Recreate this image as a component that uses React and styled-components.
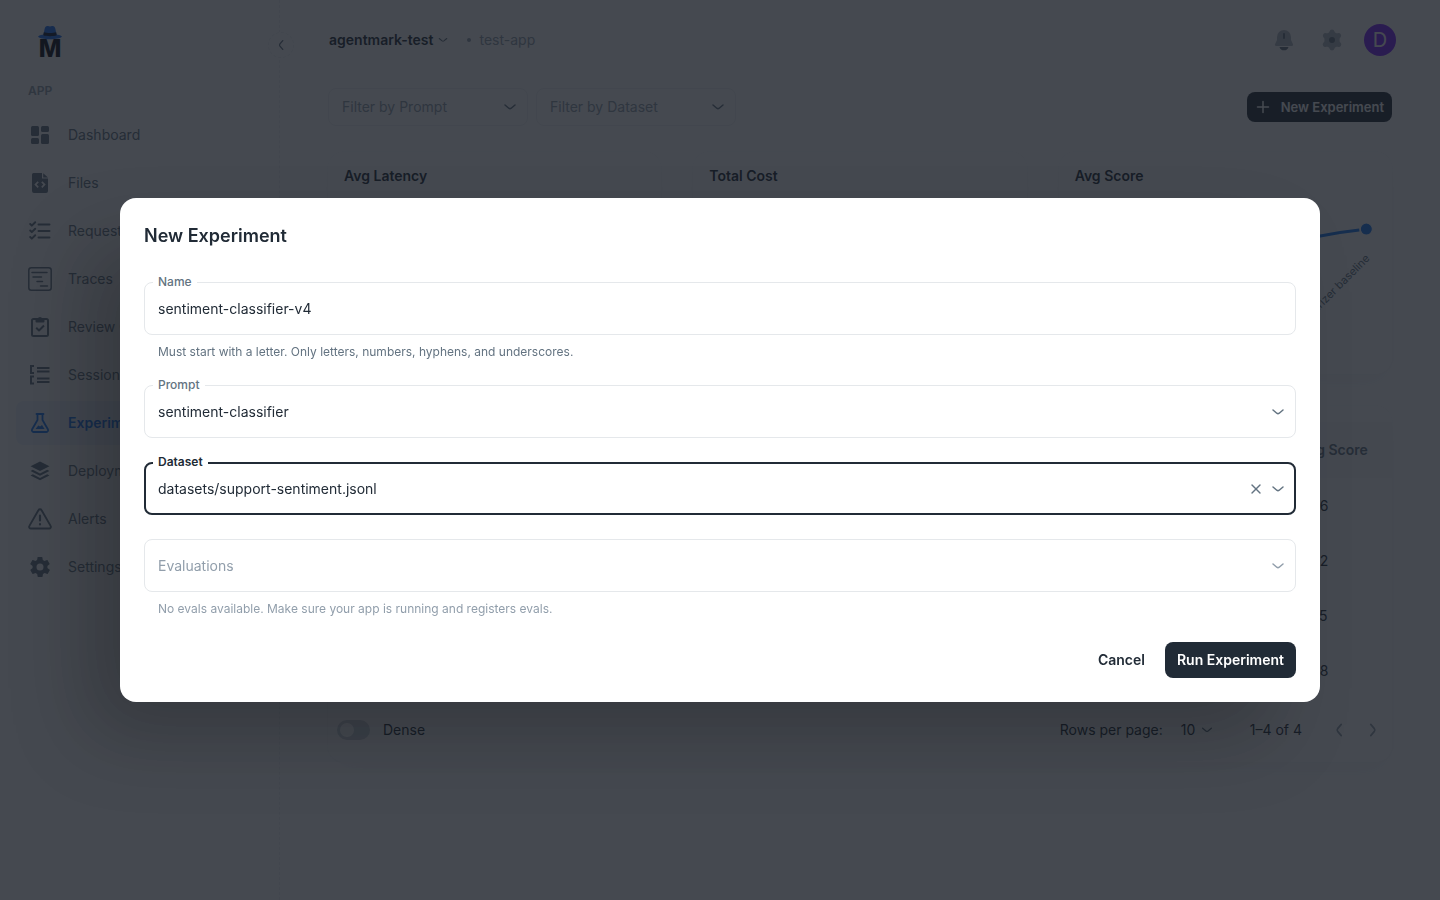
import styled, { createGlobalStyle } from 'styled-components'
import { FiX } from 'react-icons/fi'

const navItems = [
  { name: 'Dashboard', icon: 'dashboard' },
  { name: 'Files', icon: 'file' },
  { name: 'Requests', icon: 'checklist' },
  { name: 'Traces', icon: 'traces' },
  { name: 'Review Queue', icon: 'clipboard' },
  { name: 'Sessions', icon: 'sessions' },
  { name: 'Experiments', icon: 'flask', active: true },
  { name: 'Deployments', icon: 'layers' },
  { name: 'Alerts', icon: 'alert' },
  { name: 'Settings', icon: 'gear' },
]

const scores = ['0.86', '0.82', '0.75', '0.68']

const gearPath = 'M19.4 13a7.5 7.5 0 0 0 0-2l2.1-1.7c.2-.1.3-.4.1-.6l-2-3.5c-.1-.2-.4-.3-.6-.2l-2.5 1a7.3 7.3 0 0 0-1.7-1l-.4-2.6A.5.5 0 0 0 14 2h-4c-.3 0-.5.2-.5.4l-.4 2.6c-.6.3-1.2.6-1.7 1l-2.5-1c-.2-.1-.5 0-.6.2l-2 3.5c-.1.2-.1.5.1.6L4.6 11a7.5 7.5 0 0 0 0 2l-2.1 1.7c-.2.1-.3.4-.1.6l2 3.5c.1.2.4.3.6.2l2.5-1c.5.4 1.1.7 1.7 1l.4 2.6c0 .2.2.4.5.4h4c.3 0 .5-.2.5-.4l.4-2.6c.6-.3 1.2-.6 1.7-1l2.5 1c.2.1.5 0 .6-.2l2-3.5c.1-.2.1-.5-.1-.6zM12 15.5a3.5 3.5 0 1 1 0-7 3.5 3.5 0 0 1 0 7z'

const icons = {
  dashboard: (
    <g fill="currentColor">
      <rect x="3" y="3" width="8" height="10" rx="1.5" />
      <rect x="13" y="3" width="8" height="6" rx="1.5" />
      <rect x="3" y="15" width="8" height="6" rx="1.5" />
      <rect x="13" y="11" width="8" height="10" rx="1.5" />
    </g>
  ),
  file: (
    <path fill="currentColor" fillRule="evenodd" d="M5.5 2H14v5.5h6V20a2 2 0 0 1-2 2H6a2 2 0 0 1-2-2V3.5A1.500 1.500 0 0 1 5.500 2zM15.200 2.200l4.800 4.300h-4.800zM9.600 10.200 6.300 13.600l3.300 3.400 1.200-1.200-2.100-2.200 2.100-2.200zM14.400 10.200l-1.200 1.200 2.100 2.200-2.100 2.200 1.200 1.200 3.300-3.400z" />
  ),
  checklist: (
    <g fill="none" stroke="currentColor" strokeWidth="2" strokeLinecap="round" strokeLinejoin="round">
      <path d="M10.500 5.500h11M10.500 12h11M10.500 18.500h11" />
      <path d="m2.200 5 1.600 1.600 3.400-3.400M2.200 11.500l1.600 1.600 3.400-3.400M2.200 18l1.600 1.600 3.400-3.400" />
    </g>
  ),
  traces: (
    <g fill="none" stroke="currentColor" strokeWidth="1.500" strokeLinecap="round">
      <rect x="0.800" y="0.800" width="22.400" height="22.400" rx="2.500" />
      <path d="M4 5.500h15M5 10h8.500M9 14.500h5.500M12.500 19h7" />
    </g>
  ),
  clipboard: (
    <g fill="none" stroke="currentColor" strokeWidth="2" strokeLinejoin="round">
      <rect x="4" y="4" width="16" height="17" rx="1.500" />
      <path d="M8.500 4h2a1.600 1.600 0 0 1 3 0h2v2.500h-7z" fill="currentColor" />
      <path d="m8.200 12.800 2.800 2.700 5-5" />
    </g>
  ),
  sessions: (
    <g fill="none" stroke="currentColor" strokeWidth="2">
      <path d="M6 3H3v7h3M6 13.500H3v7h3" />
      <path d="M9 5h12.500M9 8.500h12.500M9 15.500h12.500M9 19h12.500" strokeWidth="1.800" />
    </g>
  ),
  flask: (
    <g fill="none" stroke="currentColor" strokeWidth="1.800" strokeLinejoin="round">
      <path d="M8.500 3h7M9.500 3v6L4 18.500A1.800 1.800 0 0 0 5.500 21h13a1.800 1.800 0 0 0 1.500-2.500L14.500 9V3" strokeLinecap="round" />
      <path d="m7.500 18 2.800-3.600 1.800 1.200 1.900-1.600 2.600 4z" fill="currentColor" stroke="none" />
    </g>
  ),
  layers: (
    <g fill="currentColor">
      <path d="m12 2.500 9.500 4.800L12 12 2.500 7.300z" />
      <path d="m4.800 10.800 7.200 3.600 7.200-3.600 2.300 1.200L12 16.800 2.500 12z" />
      <path d="m4.800 15.300 7.200 3.600 7.200-3.600 2.300 1.200-9.500 4.800-9.500-4.800z" />
    </g>
  ),
  alert: (
    <g fill="none" stroke="currentColor" strokeWidth="1.900" strokeLinecap="round" strokeLinejoin="round">
      <path d="M10.400 3.300a1.800 1.800 0 0 1 3.200 0l9 15.600a1.700 1.700 0 0 1-1.500 2.600H2.900a1.700 1.700 0 0 1-1.500-2.600z" />
      <path d="M12 8.500v5M12 17.200v.3" strokeWidth="2.200" />
    </g>
  ),
  gear: <path fill="currentColor" d={gearPath} />,
}

function Chevron({ size = 16, dir = 0 }) {
  return (
    <svg width={size} height={size} viewBox="0 0 16 16" fill="none" stroke="currentColor" strokeWidth="1.500" strokeLinecap="round" strokeLinejoin="round" aria-hidden="true">
      <path d="m3 6 3.800 3.200a2 2 0 0 0 2.400 0L13 6" transform={`rotate(${dir} 8 8)`} />
    </svg>
  )
}

function Logo() {
  return (
    <svg width="28" height="40" viewBox="0 0 28 40" role="img" aria-label="AgentMark">
      <text x="14" y="33" textAnchor="middle" fontFamily="Inter, sans-serif" fontSize="24" fontWeight="800" fill="#05070f">M</text>
      <path d="M2 12.500c2-1.500 4-1.700 5.500-2L8.600 5C9 2.600 10.400 1.500 12 2c1.400.6 2.600.6 4 0 1.600-.5 3 .6 3.400 3l1.100 5.500c1.500.3 3.500.5 5.500 2-1.500 2-6 2.700-12 2.700s-10.500-.7-12-2.700z" fill="#1b6ef3" />
      <path d="M7.800 8.300c3 1 9.400 1 12.400 0l.5 3c-3 1.200-10.400 1.200-13.400 0z" fill="#0b1630" />
    </svg>
  )
}

function Field({ id, label, helper, focused, children }) {
  return (
    <div>
      <FieldBox $focused={focused}>
        <FieldLabel htmlFor={id} $focused={focused}>{label}</FieldLabel>
        {children}
      </FieldBox>
      {helper && <Helper>{helper}</Helper>}
    </div>
  )
}

function Filter({ text }) {
  return (
    <FilterBox>
      <select aria-label={text}><option>{text}</option></select>
      <Chevron />
    </FilterBox>
  )
}

export default function App() {
  return (
    <>
      <GlobalStyle />
      <Page>
        <Sidebar>
          <LogoLink href="#"><Logo /></LogoLink>
          <NavTitle>APP</NavTitle>
          <nav>
            {navItems.map(item => (
              <NavLink key={item.name} href="#" $active={item.active}>
                <svg width="24" height="24" viewBox="0 0 24 24" aria-hidden="true">{icons[item.icon]}</svg>
                {item.name}
              </NavLink>
            ))}
          </nav>
          <Collapse aria-label="Collapse menu"><Chevron dir={90} size={14} /></Collapse>
        </Sidebar>

        <Main>
          <TopBar>
            <Workspace>agentmark-test <Chevron size={12} /></Workspace>
            <AppName>test-app</AppName>
            <TopActions>
              <IconButton aria-label="Notifications">
                <svg width="24" height="24" viewBox="0 0 24 24">
                  <path d="M12 2a7 7 0 0 0-7 7v3l-2 4.300c-.4 1 .2 1.700 1.200 1.700h15.600c1 0 1.600-.7 1.200-1.700L19 12V9a7 7 0 0 0-7-7z" fill="currentColor" opacity=".5" />
                  <path d="M7.500 19h9a4.700 4.700 0 0 1-9 0zM12 5a1 1 0 0 1 1 1v4a1 1 0 0 1-2 0V6a1 1 0 0 1 1-1z" fill="currentColor" />
                </svg>
              </IconButton>
              <IconButton aria-label="Settings">
                <svg width="24" height="24" viewBox="0 0 24 24">
                  <path d="M9.500 3.500a2.600 2.600 0 0 1 5 0l.5 1 1.500.8 1.300-.1a2.600 2.600 0 0 1 2.600 4.300l-.8 1v2.900l.8 1a2.600 2.600 0 0 1-2.600 4.400l-1.300-.1-1.500.8-.5 1a2.600 2.600 0 0 1-5 0l-.5-1-1.500-.8-1.300.1a2.600 2.600 0 0 1-2.600-4.400l.8-1v-2.900l-.8-1a2.600 2.600 0 0 1 2.600-4.300l1.300.1L9 4.500z" fill="currentColor" opacity=".5" />
                  <circle cx="12" cy="12" r="3" fill="currentColor" />
                </svg>
              </IconButton>
              <Avatar aria-label="Account">D</Avatar>
            </TopActions>
          </TopBar>

          <Content>
            <Toolbar>
              <Filter text="Filter by Prompt" />
              <Filter text="Filter by Dataset" />
              <NewButton>
                <svg width="20" height="20" viewBox="0 0 20 20" stroke="currentColor" strokeWidth="1.500" strokeLinecap="round" aria-hidden="true"><path d="M10 4.500v11M4.500 10h11" /></svg>
                New Experiment
              </NewButton>
            </Toolbar>

            <Cards>
              <Card><h2>Avg Latency</h2></Card>
              <Card><h2>Total Cost</h2></Card>
              <Card>
                <h2>Avg Score</h2>
                <Chart viewBox="0 0 301 170" aria-hidden="true">
                  <path d="M20 90C120 82 180 55 245 44Q265 40 284 38" fill="none" stroke="#1877f2" strokeWidth="3" />
                  <circle cx="291" cy="37" r="6" fill="#1877f2" stroke="#fff" strokeWidth="1" />
                  <text x="295" y="67" textAnchor="end" fontSize="11" fill="#637381" transform="rotate(-45 295 67)">summarizer baseline</text>
                </Chart>
              </Card>
            </Cards>

            <TableCard>
              <Table>
                <thead>
                  <tr><th /><th>Avg Score</th></tr>
                </thead>
                <tbody>
                  {scores.map(score => (
                    <tr key={score}><td /><td>{score}</td></tr>
                  ))}
                </tbody>
              </Table>
              <TableFooter>
                <Dense><Switch type="checkbox" />Dense</Dense>
                <Pager>
                  <label htmlFor="per-page">Rows per page:</label>
                  <PerPage>
                    <select id="per-page"><option>10</option></select>
                    <Chevron size={14} />
                  </PerPage>
                  <Range>1–4 of 4</Range>
                  <PageButton aria-label="Previous page" disabled><Chevron dir={90} size={18} /></PageButton>
                  <PageButton aria-label="Next page" disabled><Chevron dir={-90} size={18} /></PageButton>
                </Pager>
              </TableFooter>
            </TableCard>
          </Content>
        </Main>
      </Page>

      <Backdrop>
        <Dialog role="dialog" aria-modal="true" aria-labelledby="dialog-title">
          <DialogTitle id="dialog-title">New Experiment</DialogTitle>
          <Fields>
            <Field id="name" label="Name" helper="Must start with a letter. Only letters, numbers, hyphens, and underscores.">
              <Input id="name" defaultValue="sentiment-classifier-v4" />
            </Field>
            <Field id="prompt" label="Prompt">
              <Select id="prompt"><option>sentiment-classifier</option></Select>
              <Chevron />
            </Field>
            <Field id="dataset" label="Dataset" focused>
              <Select id="dataset"><option>datasets/support-sentiment.jsonl</option></Select>
              <ClearButton aria-label="Clear dataset"><FiX size={16} /></ClearButton>
              <Chevron />
            </Field>
            <div>
              <FieldBox $disabled>
                <Select aria-label="Evaluations" disabled><option>Evaluations</option></Select>
                <Chevron />
              </FieldBox>
              <Helper $disabled>No evals available. Make sure your app is running and registers evals.</Helper>
            </div>
          </Fields>
          <Actions>
            <Button>Cancel</Button>
            <Button $primary>Run Experiment</Button>
          </Actions>
        </Dialog>
      </Backdrop>
    </>
  )
}

const GlobalStyle = createGlobalStyle`
  *{
    box-sizing: border-box;
  }

  body{
    margin: 0;
    background: #fff;
    color: #212b36;
    font-family: Inter, "Liberation Sans", sans-serif;
    font-size: 14px;
    line-height: 22px;
    overflow: hidden;
  }

  button, input, select{
    font: inherit;
    color: inherit;
  }

  button{
    border: none;
    background: none;
    padding: 0;
    cursor: pointer;
  }

  select{
    appearance: none;
    background: none;
    border: none;
    outline: none;
    opacity: 1;
    padding: 0;
  }
`

const Page = styled.div`
  display: flex;
  min-height: 100vh;
`

const Sidebar = styled.aside`
  border-right: 1px dashed #edf0f2;
  flex: 0 0 280px;
  padding: 24px 16px;
  position: relative;
`

const LogoLink = styled.a`
  display: flex;
  height: 40px;
  padding-left: 20px;
`

const NavTitle = styled.div`
  color: #919eab;
  font-size: 12px;
  font-weight: 600;
  line-height: 18px;
  padding: 18px 12px 13px;
`

const NavLink = styled.a`
  align-items: center;
  background: ${props => props.$active ? 'rgba(24, 119, 242, 0.08)' : 'none'};
  border-radius: 8px;
  color: ${props => props.$active ? '#1877f2' : '#637381'};
  display: flex;
  font-weight: ${props => props.$active ? 600 : 400};
  gap: 16px;
  height: 44px;
  margin-bottom: 4px;
  padding: 0 12px;
  text-decoration: none;
  white-space: nowrap;
`

const Collapse = styled.button`
  align-items: center;
  background: #fff;
  border: 1px dashed #edf0f2;
  border-radius: 50%;
  color: #637381;
  display: flex;
  height: 26px;
  justify-content: center;
  position: absolute;
  right: -15px;
  top: 32px;
  width: 26px;
`

const Main = styled.main`
  flex: 1;
  min-width: 0;
`

const TopBar = styled.header`
  align-items: center;
  display: flex;
  height: 80px;
  padding: 0 44px 0 49px;
`

const Workspace = styled.button`
  align-items: center;
  display: flex;
  font-weight: 600;
  gap: 4px;

  svg{
    color: #637381;
  }
`

const AppName = styled.div`
  align-items: center;
  color: #919eab;
  display: flex;
  gap: 8px;
  margin-left: 18px;

  &::before{
    background: currentColor;
    border-radius: 50%;
    content: '';
    height: 4px;
    width: 4px;
  }
`

const TopActions = styled.div`
  align-items: center;
  display: flex;
  gap: 16px;
  margin-left: auto;
`

const IconButton = styled.button`
  align-items: center;
  color: #637381;
  display: flex;
  height: 32px;
  justify-content: center;
  width: 32px;
`

const Avatar = styled.button`
  background: #7b1fff;
  border-radius: 50%;
  color: #fff;
  font-size: 20px;
  height: 32px;
  line-height: 32px;
  width: 32px;
`

const Content = styled.div`
  padding: 8px 48px;
`

const Toolbar = styled.div`
  align-items: center;
  display: flex;
  gap: 8px;
`

const FilterBox = styled.div`
  align-items: center;
  border: 1px solid #edf0f2;
  border-radius: 8px;
  color: #637381;
  display: flex;
  height: 38px;
  padding: 0 9px 0 13px;
  width: 200px;

  select{
    color: #919eab;
    flex: 1;
  }
`

const NewButton = styled.button`
  align-items: center;
  background: #212b36;
  border-radius: 8px;
  color: #fff;
  display: flex;
  font-size: 13px;
  font-weight: 600;
  gap: 8px;
  height: 30px;
  margin-left: auto;
  padding: 0 8px 0 6px;
`

const Cards = styled.div`
  display: grid;
  gap: 32px;
  grid-template-columns: repeat(3, 1fr);
  margin-top: 26px;
`

const Card = styled.section`
  border-radius: 16px;
  box-shadow: 0 0 2px rgba(145, 158, 171, 0.1), 0 12px 24px -4px rgba(145, 158, 171, 0.08);
  height: 222px;
  padding: 13px 16px;

  h2{
    font-size: 14px;
    font-weight: 600;
    line-height: 22px;
    margin: 0;
  }
`

const Chart = styled.svg`
  display: block;
  margin-top: 5px;
  width: 100%;
`

const TableCard = styled.section`
  border-radius: 16px;
  box-shadow: 0 0 2px rgba(145, 158, 171, 0.1), 0 12px 24px -4px rgba(145, 158, 171, 0.08);
  margin-top: 32px;
  padding-top: 16px;
`

const Table = styled.table`
  border-collapse: collapse;
  width: 100%;

  th, td{
    height: 55px;
    padding: 0 16px;
    text-align: left;
  }

  th{
    background: #f8fafb;
    color: #637381;
    font-weight: 600;
    height: 56px;
  }

  th:last-child{
    width: 109px;
  }
`

const TableFooter = styled.div`
  align-items: center;
  display: flex;
  height: 64px;
  justify-content: space-between;
  padding: 0 2px 0 9px;
`

const Dense = styled.label`
  align-items: center;
  display: flex;
  gap: 13px;
`

const Switch = styled.input`
  appearance: none;
  background: #cdd4db;
  border-radius: 10px;
  height: 20px;
  margin: 0;
  padding: 3px;
  width: 33px;

  &::before{
    background: #fff;
    border-radius: 50%;
    content: '';
    display: block;
    height: 14px;
    width: 14px;
  }
`

const Pager = styled.div`
  align-items: center;
  display: flex;
`

const PerPage = styled.div`
  align-items: center;
  color: #637381;
  display: flex;
  gap: 4px;
  margin-left: 18px;

  select{
    color: #212b36;
  }
`

const Range = styled.span`
  margin: 0 20px 0 36px;
`

const PageButton = styled.button`
  color: #919eab;
  display: flex;
  padding: 8px;
`

const Backdrop = styled.div`
  align-items: center;
  background: rgba(22, 28, 36, 0.8);
  display: flex;
  inset: 0;
  justify-content: center;
  padding: 32px;
  position: fixed;
`

const Dialog = styled.div`
  background: #fff;
  border-radius: 16px;
  box-shadow: -40px 40px 80px -8px rgba(0, 0, 0, 0.24);
  max-width: 1200px;
  padding: 24px;
  width: 100%;
`

const DialogTitle = styled.h1`
  font-size: 18px;
  font-weight: 600;
  line-height: 28px;
  margin: 0 0 32px;
`

const Fields = styled.div`
  display: flex;
  flex-direction: column;
  gap: 24px;
`

const FieldBox = styled.div`
  align-items: center;
  border: ${props => props.$focused ? '2px solid #212b36' : '1px solid #e5e8eb'};
  border-radius: 8px;
  color: ${props => props.$disabled ? '#919eab' : '#637381'};
  display: flex;
  gap: 6px;
  height: 53px;
  padding: ${props => props.$focused ? '0 8px 0 12px' : '0 9px 0 13px'};
  position: relative;
`

const FieldLabel = styled.label`
  background: #fff;
  color: ${props => props.$focused ? '#212b36' : '#637381'};
  font-size: 12px;
  font-weight: ${props => props.$focused ? 600 : 500};
  left: ${props => props.$focused ? '7px' : '8px'};
  line-height: 16px;
  padding: 0 5px;
  position: absolute;
  top: ${props => props.$focused ? '-10px' : '-9px'};
`

const Input = styled.input`
  background: none;
  border: none;
  color: #212b36;
  flex: 1;
  min-width: 0;
  outline: none;
  padding: 0;
`

const Select = styled.select`
  color: ${props => props.disabled ? '#919eab' : '#212b36'};
  flex: 1;
  min-width: 0;
`

const ClearButton = styled.button`
  color: #637381;
  display: flex;
`

const Helper = styled.p`
  color: ${props => props.$disabled ? '#919eab' : '#637381'};
  font-size: 12px;
  line-height: 18px;
  margin: 8px 14px 0;
`

const Actions = styled.div`
  display: flex;
  gap: 8px;
  justify-content: flex-end;
  margin-top: 24px;
`

const Button = styled.button`
  background: ${props => props.$primary ? '#212b36' : 'none'};
  border-radius: 8px;
  color: ${props => props.$primary ? '#fff' : '#212b36'};
  font-weight: 600;
  height: 36px;
  padding: 0 12px;
`
